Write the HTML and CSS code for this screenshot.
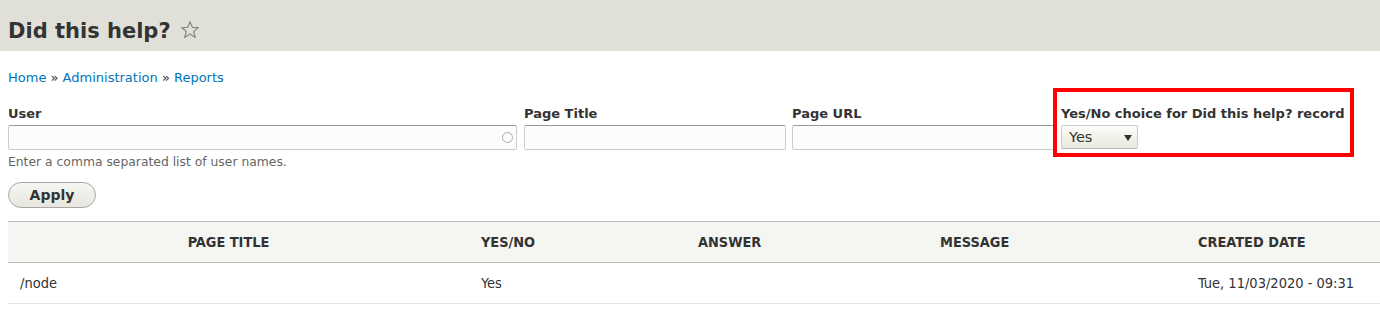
FILE: index.html
```html
<!DOCTYPE html>
<html lang="en">
<head>
    <meta charset="UTF-8">
    <title>Did this help? - Reports</title>
    <link rel="stylesheet" href="styles.css">
</head>
<body>
    <div class="page-header">
        <h1 class="page-title">Did this help?
            <svg class="shortcut-star" width="20" height="20" viewBox="0 0 20 20">
                <path d="M10 1.6 L12.3 7.3 L18.4 7.6 L13.7 11.5 L15.3 17.5 L10 14.1 L4.7 17.5 L6.3 11.5 L1.6 7.6 L7.7 7.3 Z" fill="none" stroke="#8a8a7a" stroke-width="1.2" stroke-linejoin="round"/>
            </svg>
        </h1>
    </div>

    <div class="content">
        <nav class="breadcrumb">
            <a href="#">Home</a> » <a href="#">Administration</a> » <a href="#">Reports</a>
        </nav>

        <form class="filters">
            <div class="filter-row">
                <div class="form-item item-user">
                    <label>User</label>
                    <div class="autocomplete">
                        <input type="text" class="form-text">
                        <span class="throbber"></span>
                    </div>
                    <div class="description">Enter a comma separated list of user names.</div>
                </div>
                <div class="form-item item-title">
                    <label>Page Title</label>
                    <input type="text" class="form-text">
                </div>
                <div class="form-item item-url">
                    <label>Page URL</label>
                    <input type="text" class="form-text">
                </div>
                <div class="form-item item-choice">
                    <label>Yes/No choice for Did this help? record</label>
                    <div class="form-select">Yes <span class="arrow"></span></div>
                    <div class="highlight"></div>
                </div>
            </div>
            <button type="button" class="button">Apply</button>
        </form>

        <table class="report">
            <thead>
                <tr>
                    <th class="col-title">Page Title</th>
                    <th class="col-yesno">Yes/No</th>
                    <th class="col-answer">Answer</th>
                    <th class="col-message">Message</th>
                    <th class="col-date">Created date</th>
                </tr>
            </thead>
            <tbody>
                <tr>
                    <td>/node</td>
                    <td>Yes</td>
                    <td></td>
                    <td></td>
                    <td>Tue, 11/03/2020 - 09:31</td>
                </tr>
            </tbody>
        </table>
    </div>
</body>
</html>
```

FILE: styles.css
```css
body {
    font-family: 'DejaVu Sans', 'Liberation Sans', sans-serif;
    margin: 0;
    color: #333;
    background-color: #fff;
}

.page-header {
    background-color: #e0e0d8;
    height: 51px;
    padding: 0 8px;
    box-sizing: border-box;
}

.page-title {
    margin: 0;
    padding-top: 18px;
    font-size: 21px;
    font-weight: bold;
    line-height: 27px;
    color: #333;
}

.shortcut-star {
    vertical-align: -2px;
    margin-left: 2px;
}

.content {
    padding: 0 0 0 8px;
}

.breadcrumb {
    font-size: 13px;
    line-height: 16px;
    padding-top: 19px;
    color: #333;
}

.breadcrumb a {
    color: #0074bd;
    text-decoration: none;
}

.filters {
    margin-top: 20px;
}

.filter-row {
    display: flex;
    align-items: flex-start;
}

.form-item {
    position: relative;
    margin-right: 7px;
}

.form-item label {
    display: block;
    font-size: 13px;
    font-weight: bold;
    line-height: 16px;
    margin-bottom: 3px;
}

.form-text {
    display: block;
    box-sizing: border-box;
    height: 25px;
    border: 1px solid #ccc;
    border-top-color: #999;
    border-radius: 2px;
    background-color: #fcfcfa;
    padding: 3px 6px;
    font-size: 13px;
    font-family: inherit;
    margin: 0;
}

.item-user .form-text {
    width: 509px;
}

.item-title .form-text,
.item-url .form-text {
    width: 262px;
}

.item-title {
    margin-right: 6px;
}

.autocomplete {
    position: relative;
}

.throbber {
    position: absolute;
    right: 4px;
    top: 7px;
    width: 9px;
    height: 9px;
    border: 1.5px solid #aaa;
    border-radius: 50%;
}

.description {
    font-size: 12.35px;
    color: #666;
    line-height: 15px;
    margin-top: 5px;
}

.form-select {
    box-sizing: border-box;
    width: 77px;
    height: 24px;
    border: 1px solid #ccc;
    border-bottom-color: #b4b4b4;
    border-radius: 2px;
    background: linear-gradient(#fcfcfa, #e9e9dd);
    font-size: 14.5px;
    line-height: 22px;
    padding-left: 7px;
    position: relative;
}

.form-select .arrow {
    position: absolute;
    right: 5px;
    top: 9px;
    border-left: 4.5px solid transparent;
    border-right: 4.5px solid transparent;
    border-top: 6px solid #333;
}

.highlight {
    position: absolute;
    left: -8px;
    top: -18px;
    width: 301px;
    height: 69px;
    border: 4px solid #ff0000;
    box-sizing: border-box;
}

.button {
    margin-top: 12px;
    width: 88px;
    height: 26px;
    border: 1px solid #a6a6a6;
    border-radius: 20px;
    background: linear-gradient(#f6f6f3, #e7e7df);
    font-family: inherit;
    font-size: 14px;
    font-weight: bold;
    color: #333;
    padding: 0;
    cursor: pointer;
}

.report {
    margin-top: 13px;
    width: 100%;
    table-layout: fixed;
    border-collapse: collapse;
    font-family: 'DejaVu Sans Condensed', 'DejaVu Sans', sans-serif;
    font-stretch: condensed;
}

.report th,
.report td {
    box-sizing: border-box;
    white-space: nowrap;
}

.report th {
    background-color: #f5f5f2;
    border-top: 1px solid #bfbfba;
    border-bottom: 1px solid #bfbfba;
    height: 41px;
    padding: 0 12px;
    font-size: 14.4px;
    font-weight: bold;
    text-transform: uppercase;
    text-align: left;
    color: #333;
}

.report th.col-title {
    text-align: center;
    padding-right: 32px;
}

.report td {
    height: 41px;
    padding: 0 12px;
    font-size: 14.5px;
    color: #333;
    border-bottom: 1px solid #e6e4df;
}

.col-title { width: 461px; }
.col-yesno { width: 217px; }
.col-answer { width: 242px; }
.col-message { width: 258px; }
```
